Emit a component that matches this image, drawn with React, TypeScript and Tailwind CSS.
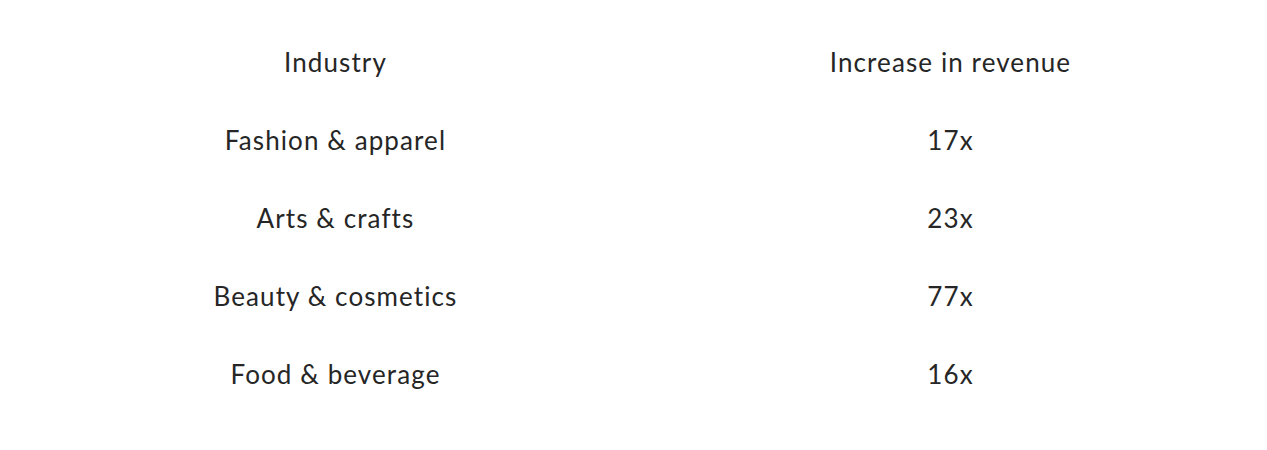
import React from 'react';

const rows: [string, string][] = [
  ['Industry', 'Increase in revenue'],
  ['Fashion & apparel', '17x'],
  ['Arts & crafts', '23x'],
  ['Beauty & cosmetics', '77x'],
  ['Food & beverage', '16x'],
];

const App: React.FC = () => {
  return (
    <div className="w-[1267px] h-[450px] bg-white pt-[23px] pl-[28px]" style={{ fontFamily: 'Lato, "Noto Sans", sans-serif' }}>
      <table className="w-[1230px] table-fixed border-collapse text-[#262626]">
        <tbody>
          {rows.map(([a, b], i) => (
            <tr key={i} className="h-[78px]">
              <td className="w-1/2 text-center align-middle text-[26px] leading-none tracking-[1.1px]">{a}</td>
              <td className="w-1/2 text-center align-middle text-[26px] leading-none tracking-[1.1px]">{b}</td>
            </tr>
          ))}
        </tbody>
      </table>
    </div>
  );
};

export default App;
